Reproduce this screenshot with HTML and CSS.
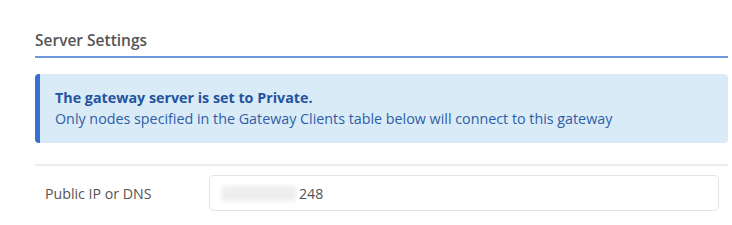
FILE: index.html
```html
<!DOCTYPE html>
<html lang="en">
<head>
    <meta charset="UTF-8">
    <title>Server Settings</title>
    <link rel="stylesheet" href="styles.css">
</head>
<body>
    <section class="settings">
        <h2 class="section-title">Server Settings</h2>
        <div class="alert">
            <strong>The gateway server is set to Private.</strong>
            <span>Only nodes specified in the Gateway Clients table below will connect to this gateway</span>
        </div>
        <div class="form-row">
            <label for="publicIp">Public IP or DNS</label>
            <div class="input-box" id="publicIp">
                <span class="masked"></span><span class="ip-end">248</span>
            </div>
        </div>
    </section>
</body>
</html>
```

FILE: styles.css
```css
body { margin: 0; font-family: "Open Sans", Arial, sans-serif; background: #fff; }
.settings { margin: 0 4px 0 35px; padding-top: 30px; }
.section-title { font-size: 15.5px; font-weight: 600; color: #555; margin: 0; padding-bottom: 6px; border-bottom: 2px solid #6d98dc; line-height: 20px; }
.alert { margin-top: 16px; background: #d9ebf6; border-left: 5px solid #3a6fd2; border-radius: 4px; padding: 13px 15px 14px; color: #2f5ea8; font-size: 14.3px; line-height: 21px; }
.alert strong { display: block; font-weight: 700; color: #24539f; }
.alert span { display: block; }
.form-row { display: flex; align-items: center; margin-top: 21px; border-top: 2px solid #ebebeb; padding-top: 9px; }
.form-row label { width: 164px; padding-left: 10px; font-size: 14.2px; color: #555; }
.input-box { width: 510px; height: 36px; box-sizing: border-box; border: 1px solid #e3e3e3; border-radius: 5px; display: flex; align-items: center; padding-left: 12px; font-size: 14.2px; color: #555; }
.masked { display: inline-block; width: 74px; height: 15px; background: #eeeeee; filter: blur(2px); margin-right: 3px; }
```
